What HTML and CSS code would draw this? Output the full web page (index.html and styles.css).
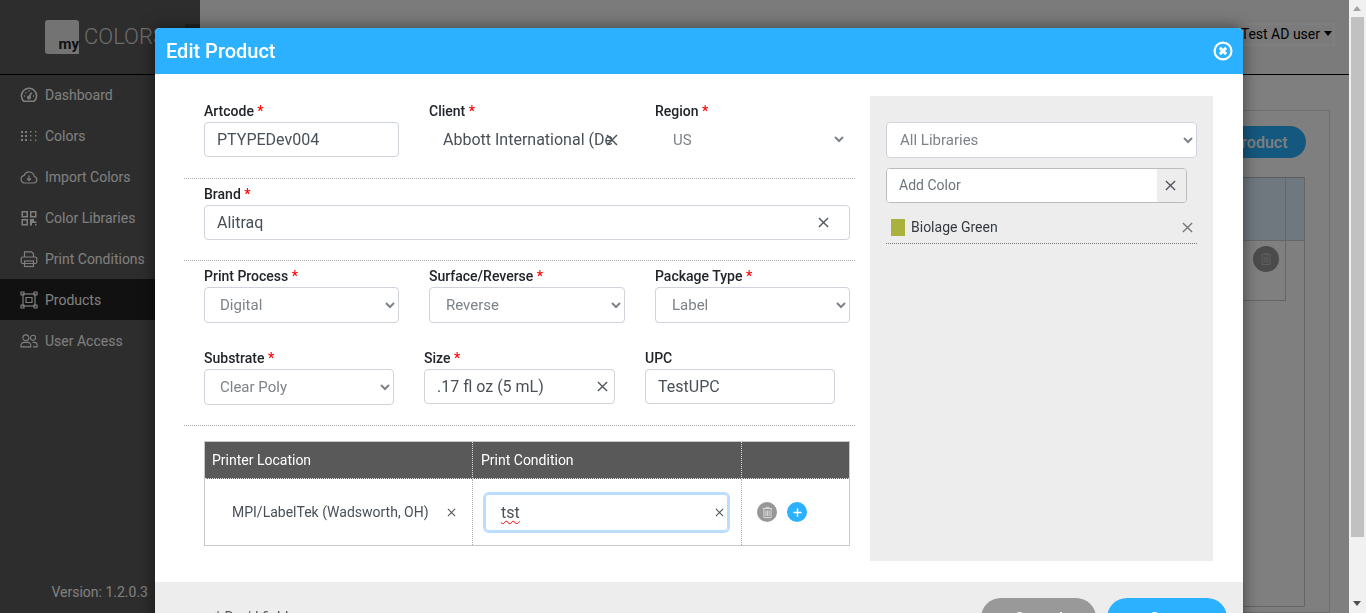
FILE: index.html
```html
<!DOCTYPE html>
<html lang="en">
<head>
    <meta charset="UTF-8">
    <title>Edit Product</title>
    <link rel="stylesheet" href="styles.css">
</head>
<body>
    <div class="app">
        <aside class="sidebar">
            <div class="logo">
                <div class="logo-mark">my</div>
                <div class="logo-word">COLORS</div>
                <div class="side-toggle"></div>
            </div>
            <nav class="menu">
                <a class="menu-item">
                    <svg viewBox="0 0 18 18" class="heavy"><path d="M3.6 15.2a7.6 7.6 0 1 1 10.8 0z"/><path d="M9 11l2.6-4.4"/><circle cx="9" cy="11.6" r="1.2"/><path d="M4 10h1M5.6 6.4l.8.6M9 4.6v1M13 10h1"/></svg>
                    Dashboard
                </a>
                <a class="menu-item">
                    <svg viewBox="0 0 18 18" class="solid"><path d="M1 4h2v2H1zM5 4h2v2H5zM1 8h2v2H1zM5 8h2v2H5zM1 12h2v2H1zM5 12h2v2H5z"/><path d="M10 4h1.4v1.4H10zM15 4h1.4v1.4H15zM10 8h1.4v1.4H10zM15 8h1.4v1.4H15zM10 12.5h1.4v1.4H10zM15 12.5h1.4v1.4H15z"/></svg>
                    Colors
                </a>
                <a class="menu-item">
                    <svg viewBox="0 0 18 18"><path d="M4.5 15h9.3a3.3 3.3 0 0 0 .5-6.5 5.2 5.2 0 0 0-10-1.2A3.9 3.9 0 0 0 4.5 15z"/><path d="M9 7.500v4.800M7 10.500l2 2 2-2"/></svg>
                    Import Colors
                </a>
                <a class="menu-item">
                    <svg viewBox="0 0 18 18" class="solid"><path fill-rule="evenodd" d="M1.5 2H8v6.500H1.5zM3 3.500V7h3.500V3.500zM10 2h6.500v6.500H10zM11.500 3.500V7H15V3.500zM1.500 10H8v6.500H1.500zM3 11.500V15h3.500v-3.500zM10 10h4v2.500h2.500V14H12v2.500h-2zM15 15h1.500v1.500H15z"/></svg>
                    Color Libraries
                </a>
                <a class="menu-item">
                    <svg viewBox="0 0 18 18"><path d="M4.5 7V1.800h7l2 2V7"/><rect x="1.2" y="7" width="15.6" height="6.500" rx="1.5"/><rect x="4.5" y="11" width="9" height="5.500"/></svg>
                    Print Conditions
                </a>
                <a class="menu-item active">
                    <svg viewBox="0 0 18 18"><rect x="3" y="3" width="12" height="12"/><path d="M6 6.500h6v5H6z"/><path d="M1 1h3v3H1zM14 1h3v3h-3zM1 14h3v3H1zM14 14h3v3h-3z"/></svg>
                    Products
                </a>
                <a class="menu-item">
                    <svg viewBox="0 0 20 18"><circle cx="6.5" cy="5.5" r="3.3"/><circle cx="14.5" cy="5.5" r="2.8"/><path d="M1 15.500V14a3.500 3.500 0 0 1 3.500-3.500h4A3.500 3.500 0 0 1 12 14v1.500zM14 10.500h2a3 3 0 0 1 3 3v2h-4.500"/></svg>
                    User Access
                </a>
            </nav>
            <div class="version">Version: 1.2.0.3</div>
        </aside>
        <main class="main">
            <header class="topbar">
                <span class="user-menu">Test AD user<i class="caret"></i></span>
            </header>
            <section class="panel">
                <div class="panel-actions">
                    <button class="add-btn">Add Product</button>
                </div>
                <div class="list-wrap">
                    <table class="list">
                        <tr class="list-head"><th></th><th class="narrow"></th></tr>
                        <tr class="list-row">
                            <td>
                                <span class="round-btn faded">
                                    <svg viewBox="0 0 14 16"><path d="M1 3h12M5 3V1.500h4V3M2.500 3v11.500h9V3M5 5.500v7M7 5.500v7M9 5.500v7"/></svg>
                                </span>
                            </td>
                            <td class="narrow"></td>
                        </tr>
                    </table>
                </div>
            </section>
        </main>
    </div>

    <div class="scrollbar">
        <i class="arrow-up"></i>
        <div class="thumb"></div>
        <i class="arrow-down"></i>
    </div>

    <div class="backdrop"></div>

    <div class="modal">
        <div class="modal-head">
            <h2>Edit Product</h2>
            <svg class="modal-close" viewBox="0 0 18 18"><circle cx="9" cy="9" r="7.6"/><path d="M6.2 6.2l5.600 5.600M11.800 6.2l-5.600 5.600"/></svg>
        </div>
        <div class="modal-body">
            <div class="form-side">
                <div class="form-row row-a">
                    <div class="field">
                        <label>Artcode <b>*</b></label>
                        <input class="control" value="PTYPEDev004">
                    </div>
                    <div class="field client">
                        <label>Client <b>*</b></label>
                        <div class="clearable">
                            <input class="control plain" value="Abbott International (Default)">
                            <svg class="clear clear-client" viewBox="0 0 12 12"><path d="M1 1l10 10M11 1L1 11"/></svg>
                        </div>
                    </div>
                    <div class="field">
                        <label>Region <b>*</b></label>
                        <select class="control pick plain"><option>US</option></select>
                    </div>
                </div>
                <div class="form-row row-a ruled">
                    <div class="field wide">
                        <label>Brand <b>*</b></label>
                        <div class="clearable">
                            <input class="control" value="Alitraq">
                            <svg class="clear clear-brand" viewBox="0 0 12 12"><path d="M1 1l10 10M11 1L1 11"/></svg>
                        </div>
                    </div>
                </div>
                <div class="form-row row-c ruled">
                    <div class="field">
                        <label>Print Process <b>*</b></label>
                        <select class="control pick"><option>Digital</option></select>
                    </div>
                    <div class="field">
                        <label>Surface/Reverse <b>*</b></label>
                        <select class="control pick"><option>Reverse</option></select>
                    </div>
                    <div class="field">
                        <label>Package Type <b>*</b></label>
                        <select class="control pick"><option>Label</option></select>
                    </div>
                </div>
                <div class="form-row row-d">
                    <div class="field">
                        <label>Substrate <b>*</b></label>
                        <select class="control pick"><option>Clear Poly</option></select>
                    </div>
                    <div class="field">
                        <label>Size <b>*</b></label>
                        <div class="clearable">
                            <input class="control" value=".17 fl oz (5 mL)">
                            <svg class="clear clear-size" viewBox="0 0 12 12"><path d="M1 1l10 10M11 1L1 11"/></svg>
                        </div>
                    </div>
                    <div class="field">
                        <label>UPC</label>
                        <input class="control" value="TestUPC">
                    </div>
                </div>
                <table class="printers">
                    <tr>
                        <th class="col-loc">Printer Location</th>
                        <th class="col-cond">Print Condition</th>
                        <th></th>
                    </tr>
                    <tr>
                        <td class="col-loc">
                            <div class="loc">
                                <span>MPI/LabelTek (Wadsworth, OH)</span>
                                <svg class="clear-small" viewBox="0 0 10 10"><path d="M1 1l8 8M9 1L1 9"/></svg>
                            </div>
                        </td>
                        <td class="col-cond">
                            <div class="focus-box">
                                <span class="misspelt">tst</span>
                                <svg class="clear-small" viewBox="0 0 10 10"><path d="M1 1l8 8M9 1L1 9"/></svg>
                            </div>
                        </td>
                        <td>
                            <div class="row-actions">
                                <span class="round-btn trash">
                                    <svg viewBox="0 0 14 16"><path d="M1 3h12M5 3V1.500h4V3M2.500 3v11.500h9V3M5 5.500v7M7 5.500v7M9 5.500v7"/></svg>
                                </span>
                                <span class="round-btn plus">
                                    <svg viewBox="0 0 12 12"><path d="M6 1.500v9M1.500 6h9"/></svg>
                                </span>
                            </div>
                        </td>
                    </tr>
                </table>
            </div>
            <div class="color-side">
                <select class="control pick lib"><option>All Libraries</option></select>
                <div class="add-color">
                    <input placeholder="Add Color">
                    <span class="add-clear"><svg viewBox="0 0 12 12"><path d="M1 1l10 10M11 1L1 11"/></svg></span>
                </div>
                <div class="color-item">
                    <i class="swatch"></i>
                    <span>Biolage Green</span>
                    <svg viewBox="0 0 12 12"><path d="M1 1l10 10M11 1L1 11"/></svg>
                </div>
            </div>
        </div>
        <div class="modal-foot">
            <span class="required">* Req'd fields</span>
            <div class="foot-btns">
                <button class="pill grey">Cancel</button>
                <button class="pill blue">Save</button>
            </div>
        </div>
    </div>
</body>
</html>
```

FILE: styles.css
```css
* {
    box-sizing: border-box;
}
html, body {
    height: 100%;
    margin: 0;
    overflow: hidden;
}
body {
    font-family: Roboto, "Liberation Sans", sans-serif;
    font-size: 14px;
    color: #212529;
    background-color: #fff;
}
.app {
    display: flex;
    height: 613px;
    padding-right: 17px;
}

/* sidebar */
.sidebar {
    width: 200px;
    flex: none;
    display: flex;
    flex-direction: column;
    background-color: #5a5a5a;
    color: #fff;
}
.logo {
    height: 75px;
    flex: none;
    display: flex;
    align-items: center;
    padding: 0 0 1px 45px;
    border-bottom: 1px solid #000;
    position: relative;
}
.logo-mark {
    width: 34px;
    height: 34px;
    display: flex;
    align-items: flex-end;
    justify-content: flex-end;
    padding-bottom: 2px;
    background-color: #e6e6e6;
    border-radius: 3px 3px 0 3px;
    color: #222;
    font-weight: 700;
    font-size: 15px;
    line-height: 16px;
}
.logo-word {
    margin-left: 5px;
    font-size: 22px;
    font-weight: 300;
    color: #d8d8d8;
}
.side-toggle {
    position: absolute;
    left: 185px;
    top: 24px;
    width: 15px;
    height: 20px;
    background-color: #444;
}
.menu {
    margin-top: -1px;
}
.menu-item {
    height: 41px;
    display: flex;
    align-items: center;
    gap: 7px;
    padding-left: 20px;
    color: #fff;
}
.menu-item svg {
    width: 18px;
    height: 18px;
    flex: none;
    fill: none;
    stroke: #fff;
    stroke-width: 1.2;
}
.menu-item svg.heavy {
    stroke-width: 1.6;
}
.menu-item svg.solid {
    fill: #fff;
    stroke: none;
}
.menu-item.active {
    background-color: #222;
}
.version {
    margin-top: auto;
    padding: 0 52px 13px 0;
    text-align: right;
}

/* page behind the dialog */
.main {
    flex: 1;
    min-width: 0;
    display: flex;
    flex-direction: column;
    background-color: #fff;
}
.topbar {
    height: 75px;
    flex: none;
    padding: 24px 15px 0 0;
    text-align: right;
    border-bottom: 1px solid #000;
    background-color: #f6f6f6;
}
.user-menu {
    display: inline-block;
    height: 21px;
    padding: 0 2px;
    outline: 2px solid #fff;
    outline-offset: -1px;
    color: #000;
    line-height: 20px;
}
.caret {
    display: inline-block;
    margin-left: 4px;
    vertical-align: 3px;
    border-top: 5px solid #000;
    border-left: 4px solid transparent;
    border-right: 4px solid transparent;
}
.panel {
    flex: 1;
    margin: 35px 19px 0 30px;
    padding: 15px 24px 5px 20px;
    display: flex;
    flex-direction: column;
    border: 1px solid #ddd;
}
.panel-actions {
    display: flex;
    justify-content: flex-end;
    height: 51px;
    flex: none;
}
.add-btn {
    width: 170px;
    height: 32px;
    margin-right: -1px;
    border: 0;
    border-radius: 16px;
    background-color: #2bb1ff;
    color: #fff;
    font: 500 16px Roboto, sans-serif;
    padding: 0 0 0 44px;
}
.list-wrap {
    flex: 1;
    border: 1px solid #ccc;
    border-top-color: #bbb;
}
.list {
    width: 100%;
    border-collapse: collapse;
}
.list-head {
    height: 62px;
    background-color: #dff1ff;
}
.list-row {
    height: 60px;
}
.list th, .list td {
    padding: 0;
    vertical-align: top;
    text-align: right;
}
.list .narrow {
    width: 19px;
    border-left: 1px solid #ccc;
}
.list-row td {
    border-top: 1px solid #ccc;
    border-bottom: 1px solid #ccc;
    padding: 5px 6px 0 0;
}
.list-row td.narrow {
    border-top: 1px solid #ccc;
    border-bottom: 0;
}

/* scrollbar */
.scrollbar {
    position: fixed;
    top: 0;
    right: 0;
    width: 17px;
    height: 613px;
    z-index: 5;
    background-color: #f1f1f1;
}
.thumb {
    position: absolute;
    top: 17px;
    left: 2px;
    right: 2px;
    height: 520px;
    background-color: #c1c1c1;
}
.arrow-up, .arrow-down {
    position: absolute;
    left: 4px;
    border-left: 4px solid transparent;
    border-right: 4px solid transparent;
}
.arrow-up {
    top: 6px;
    border-bottom: 5px solid #a3a3a3;
}
.arrow-down {
    bottom: 7px;
    border-top: 5px solid #505050;
}

/* dialog */
.backdrop {
    position: fixed;
    left: 0;
    top: 0;
    right: 17px;
    height: 613px;
    background-color: rgba(0,0,0,0.5);
}
.modal {
    position: absolute;
    left: 155px;
    top: 28px;
    width: 1088px;
    background-color: #fff;
    border-radius: 5px 5px 0 0;
    box-shadow: 0 0 16px rgba(0,0,0,0.5);
}
.modal-head {
    height: 46px;
    display: flex;
    align-items: center;
    justify-content: space-between;
    padding: 0 10px 0 11px;
    background-color: #2bb1ff;
    border-radius: 5px 5px 0 0;
}
.modal-head h2 {
    margin: 0;
    font-size: 20px;
    font-weight: 500;
    color: #fff;
}
.modal-close {
    width: 20px;
    height: 20px;
    fill: none;
    stroke: #fff;
}
.modal-close circle {
    stroke-width: 2;
}
.modal-close path {
    stroke-width: 2.6;
}
.modal-body {
    height: 508px;
    display: flex;
    padding: 22px 30px 21px 29px;
    gap: 15px;
}
.form-side {
    width: 671px;
    flex: none;
}
.form-row {
    display: flex;
    gap: 30px;
    padding-left: 20px;
}
.ruled {
    border-top: 1px dotted #aaa;
}
.row-a {
    height: 82px;
    padding-top: 6px;
}
.row-c {
    height: 89px;
    padding-top: 6px;
}
.row-d {
    height: 77px;
    border-bottom: 1px dotted #aaa;
}
.field {
    width: 195px;
    flex: none;
}
.field.wide {
    width: 646px;
}
.field.client, .row-c .field:nth-child(2) {
    width: 196px;
}
.row-d .field {
    width: 190px;
}
.row-d .field:nth-child(2) {
    width: 191px;
}
.field label {
    display: block;
    height: 20px;
    line-height: 19px;
    font-weight: 500;
}
.field label b {
    color: #f00;
    font-weight: 500;
}
.control {
    display: block;
    width: 100%;
    height: 35px;
    padding: 0 12px;
    background-color: #fff;
    border: 1px solid #ced4da;
    border-radius: 4px;
    color: #495057;
    font: 16px Roboto, sans-serif;
    outline: none;
}
.control.plain {
    border-color: transparent;
}
input.plain {
    padding: 0 12px 0 13px;
}
.pick {
    height: 36px;
    padding: 0 11px;
    font-size: 15px;
    color: #7d8389;
}
.row-c .field + .field .pick {
    padding-left: 12px;
}
.pick.plain {
    width: 193px;
    height: 35px;
    padding-left: 13px;
}
.clearable {
    position: relative;
}
.clear {
    position: absolute;
    top: 12px;
    width: 11px;
    height: 11px;
    fill: none;
    stroke: #50565c;
    stroke-width: 1.5;
}
.clear-client {
    left: 177px;
    width: 12px;
    height: 12px;
}
.clear-brand {
    right: 21px;
}
.clear-size {
    right: 7px;
}

/* printer table */
.printers {
    width: 646px;
    margin: 15px 0 0 20px;
    border-collapse: collapse;
    border: 1px solid #c8c8c8;
    table-layout: fixed;
}
.printers th {
    height: 37px;
    padding: 0 8px;
    background-color: #595959;
    color: #fff;
    font-weight: 400;
    text-align: left;
    border-bottom: 1px dotted #ddd;
}
.printers td {
    height: 67px;
    padding: 0;
}
.printers .col-loc {
    width: 268px;
    border-right: 1px dotted #aaa;
}
.printers th.col-loc {
    padding-left: 7px;
    border-right-color: #ddd;
}
.printers .col-cond {
    width: 269px;
    border-right: 1px dotted #aaa;
}
.printers th.col-cond {
    border-right-color: #ddd;
}
.loc {
    display: flex;
    align-items: center;
    justify-content: space-between;
    padding: 0 16px 0 27px;
    color: #495057;
}
.clear-small {
    width: 9px;
    height: 9px;
    flex: none;
    fill: none;
    stroke: #50565c;
    stroke-width: 1.2;
}
.focus-box {
    display: flex;
    align-items: center;
    justify-content: space-between;
    height: 37px;
    margin: 0 13px 0 12px;
    padding: 0 3px 0 15px;
    border: 1px solid #b9dcff;
    border-radius: 4px;
    box-shadow: 0 0 0 2px #b9dcff;
    color: #495057;
    font-size: 16px;
}
.misspelt {
    text-decoration: underline wavy #f00 1px;
    text-underline-offset: 2px;
}
.row-actions {
    display: flex;
    gap: 10px;
    padding-left: 15px;
}
.round-btn {
    width: 20px;
    height: 20px;
    display: inline-flex;
    align-items: center;
    justify-content: center;
    border-radius: 50%;
}
.round-btn svg {
    fill: none;
    stroke: #fff;
}
.trash {
    background-color: #979797;
}
.trash svg {
    width: 11px;
    height: 13px;
    stroke: #ddd;
    stroke-width: 1.2;
}
.faded {
    width: 26px;
    height: 26px;
    background-color: #979797;
}
.faded svg {
    width: 12px;
    height: 14px;
    stroke: #b8b8b8;
    stroke-width: 1.2;
}
.plus {
    background-color: #2bb1ff;
}
.plus svg {
    width: 11px;
    height: 11px;
    stroke-width: 1.6;
}

/* right column */
.color-side {
    width: 343px;
    height: 465px;
    flex: none;
    padding: 26px 16px 0;
    background-color: #ededed;
}
.lib {
    width: 311px;
    padding-left: 9px;
}
.add-color {
    width: 301px;
    height: 35px;
    margin-top: 10px;
    display: flex;
    overflow: hidden;
    border: 1px solid #bbb;
    border-radius: 4px;
    background-color: #fff;
}
.add-color input {
    flex: 1;
    min-width: 0;
    border: 0;
    outline: none;
    padding: 0 12px 2px;
    font: 14px Roboto, sans-serif;
}
.add-color input::placeholder {
    color: #6c757d;
}
.add-clear {
    width: 29px;
    display: flex;
    align-items: center;
    justify-content: center;
    padding-right: 2px;
    background-color: #ededed;
}
.add-clear svg {
    width: 11px;
    height: 11px;
    fill: none;
    stroke: #50565c;
    stroke-width: 1.5;
}
.color-item {
    width: 311px;
    height: 41px;
    display: flex;
    align-items: center;
    gap: 6px;
    padding: 8px 4px 0 5px;
    border-bottom: 1px dotted #777;
    color: #343a40;
}
.swatch {
    width: 14px;
    height: 17px;
    background-color: #a9b23c;
}
.color-item svg {
    width: 11px;
    height: 11px;
    margin-left: auto;
    fill: none;
    stroke: #777;
    stroke-width: 1.5;
}

/* footer, cut off by the window */
.modal-foot {
    height: 70px;
    display: flex;
    justify-content: space-between;
    padding: 16px 16px 0 60px;
    background-color: #ededed;
}
.required {
    padding-top: 11px;
    color: #555;
}
.foot-btns {
    display: flex;
    gap: 11px;
}
.pill {
    height: 40px;
    border: 0;
    border-radius: 20px;
    color: #fff;
    font: 500 16px Roboto, sans-serif;
}
.grey {
    width: 115px;
    background-color: #999;
}
.blue {
    width: 120px;
    background-color: #2bb1ff;
}
```
